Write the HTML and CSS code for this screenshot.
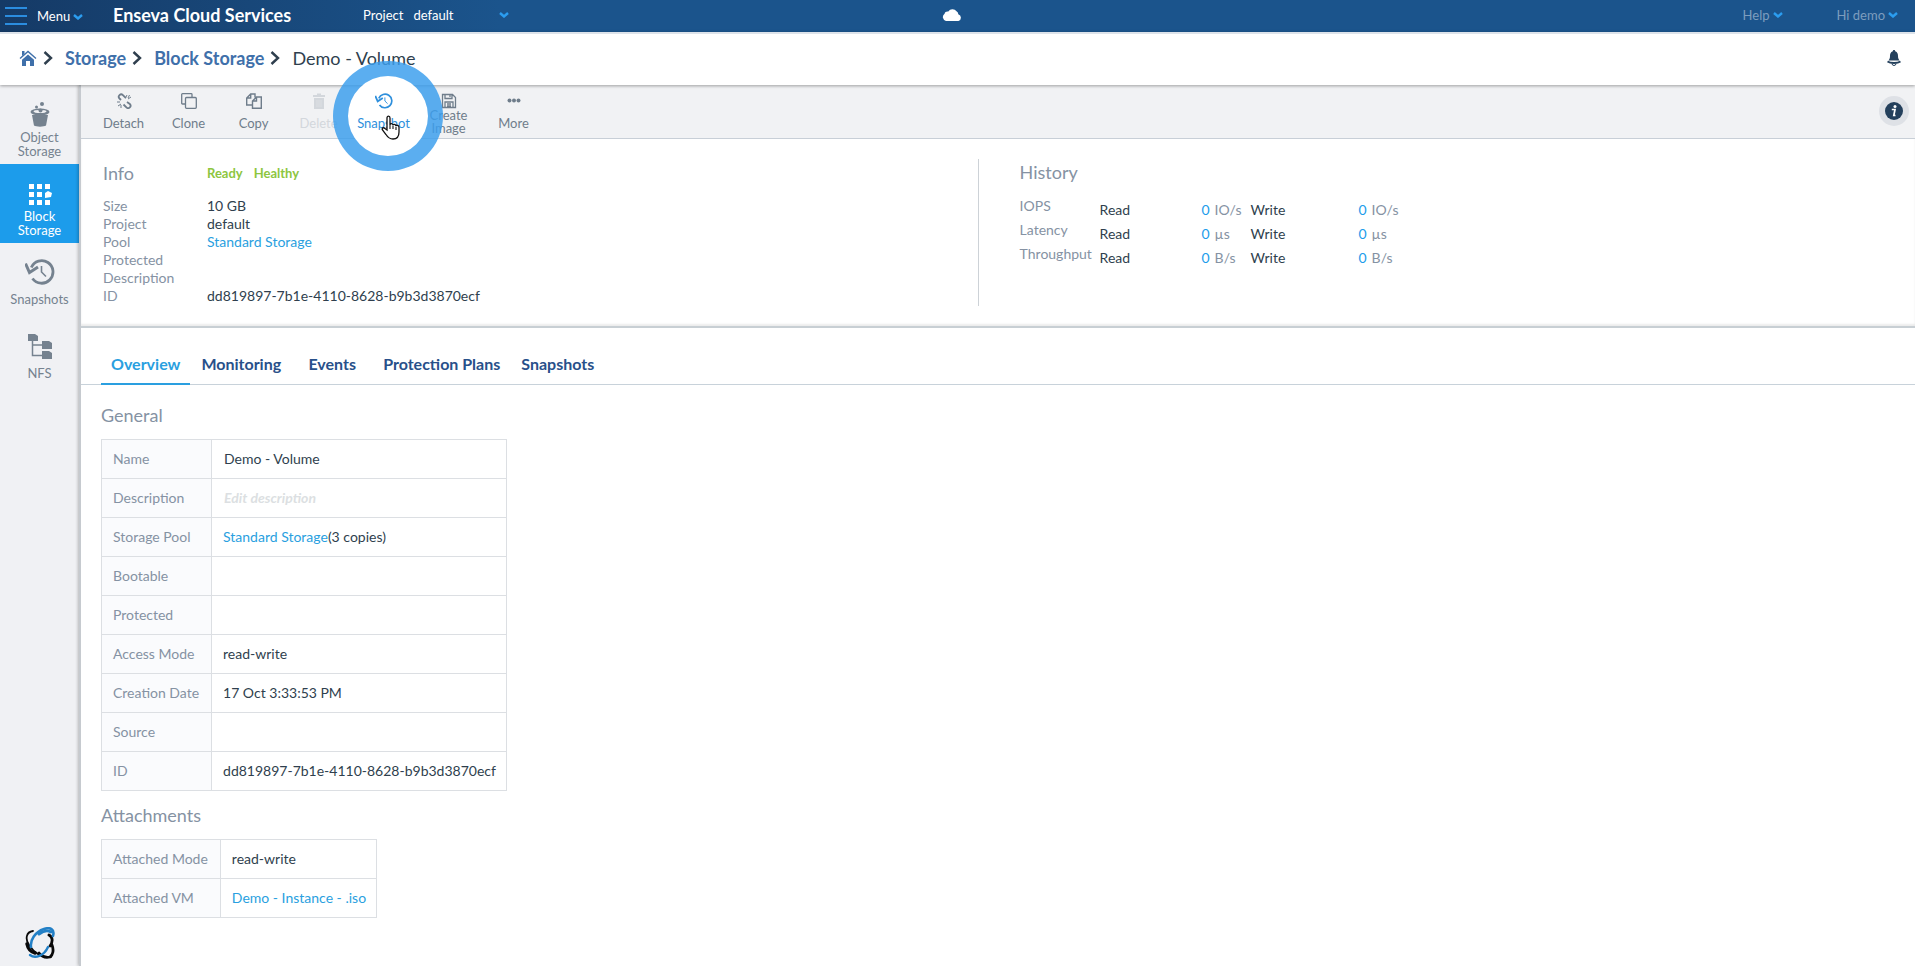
FILE: index.html
```html
<!DOCTYPE html>
<html lang="en">

<head>
    <meta charset="UTF-8" />
    <meta name="viewport" content="width=device-width, initial-scale=1.0" />
    <title>Enseva Cloud Services</title>
    <link rel="stylesheet" href="styles.css">
</head>

<body>
    <!-- shared shapes -->
    <svg class="defs" aria-hidden="true">
        <symbol id="caret" viewBox="0 0 10 6">
            <path d="M1 1l4 3.5L9 1" fill="none" stroke="currentColor" stroke-width="2.4" />
        </symbol>
        <symbol id="chevron" viewBox="0 0 10 14">
            <path d="M1.5 1l6.5 6-6.5 6" fill="none" stroke="currentColor" stroke-width="2.4" />
        </symbol>
        <symbol id="history" viewBox="0 0 30 26">
            <path d="M7.5 19.5a11.3 11.3 0 1 0-1.2-11" fill="none" stroke="currentColor" stroke-width="2.8" />
            <path d="M0.5 4.5l4 9 8.5-5.5" fill="none" stroke="currentColor" stroke-width="3" />
            <path d="M16.5 7v6l4.5 4.5" fill="none" stroke="currentColor" stroke-width="1.6" />
        </symbol>
    </svg>

    <header class="topbar">
        <div class="topbar-left">
            <button class="menu-btn" type="button">
                <svg class="burger" viewBox="0 0 22 18"><path d="M0 1h22M0 9h22M0 17h22" stroke="currentColor" stroke-width="2" /></svg>
                <span>Menu</span>
                <svg class="caret"><use href="#caret" /></svg>
            </button>
            <h1 class="brand">Enseva Cloud Services</h1>
            <div class="project">
                <label for="project">Project</label>
                <select id="project">
                    <option>default</option>
                </select>
                <svg class="caret"><use href="#caret" /></svg>
            </div>
        </div>
        <svg class="cloud" viewBox="0 0 20 12">
            <path d="M4 12a4 4 0 0 1-1.4-7.2C2.8 2.8 5 2 6.3 2.6A5 5 0 0 1 14.5 2.3a3.2 3.2 0 0 1 1.8 3A3.5 3.5 0 0 1 16.5 12z" fill="#fff" />
        </svg>
        <nav class="user-nav">
            <button type="button">Help <svg class="caret"><use href="#caret" /></svg></button>
            <button type="button">Hi demo <svg class="caret"><use href="#caret" /></svg></button>
        </nav>
    </header>

    <div class="crumbs">
        <nav class="trail">
            <a href="#" aria-label="Home">
                <svg class="home" viewBox="0 0 18 16">
                    <path d="M1 8.5L9 1.5l8 7" fill="none" stroke="currentColor" stroke-width="1.4" />
                    <path d="M3 1h2.5v3L3 6z" fill="currentColor" />
                    <path d="M3 9.8l6-5.2 6 5.2V16h-4v-5H7v5H3z" fill="currentColor" />
                </svg>
            </a>
            <svg class="chevron"><use href="#chevron" /></svg>
            <a href="#">Storage</a>
            <svg class="chevron"><use href="#chevron" /></svg>
            <a href="#">Block Storage</a>
            <svg class="chevron"><use href="#chevron" /></svg>
            <span class="current">Demo - Volume</span>
        </nav>
        <button class="bell" type="button" aria-label="Alerts">
            <svg viewBox="0 0 14 16">
                <path d="M7 0c.8 0 1.1.5 1.2 1.2C10.5 2 11 4 11 6c0 2.2.5 3 1.5 4.5h-11C2.5 9 3 8.2 3 6c0-2 .5-4 2.8-4.8C5.9.5 6.2 0 7 0z" fill="currentColor" />
                <path d="M.5 11.5c3 2 10 2 13 0" fill="none" stroke="currentColor" stroke-width="1.8" />
                <path d="M5 13.5a2 2 0 0 0 4 0" fill="none" stroke="currentColor" />
            </svg>
        </button>
    </div>

    <div class="layout">
        <aside class="sidebar">
            <a href="#" class="side-item">
                <svg class="side-icon" viewBox="0 0 28 28">
                    <path d="M6 15h16l-2 10.5c-2 1.5-10 1.5-12 0z" fill="currentColor" />
                    <ellipse cx="14" cy="12" rx="9.5" ry="3.4" fill="currentColor" />
                    <ellipse cx="14" cy="11.5" rx="6.5" ry="1.6" fill="#f0f1f4" />
                    <circle cx="14.5" cy="10.5" r="2" fill="currentColor" />
                    <circle cx="10.5" cy="7" r="1.5" fill="currentColor" />
                    <circle cx="16" cy="4" r="2" fill="currentColor" />
                </svg>
                <span>Object Storage</span>
            </a>
            <a href="#" class="side-item active">
                <svg class="side-icon" viewBox="0 0 28 28">
                    <path d="M3 5h5v5H3zM11 5h5v5h-5zM19 5h5v5h-5zM3 13h5v5H3zM11 13h5v5h-5zM19 14l3-2 4 2-1 4-6 1zM3 21h5v5H3zM11 21h5v5h-5zM19 21h5v5h-5z" fill="currentColor" />
                </svg>
                <span>Block Storage</span>
            </a>
            <a href="#" class="side-item single">
                <svg class="history-icon"><use href="#history" /></svg>
                <span>Snapshots</span>
            </a>
            <a href="#" class="side-item single">
                <svg class="history-icon" viewBox="0 0 30 26">
                    <path d="M3 1h7l3 2v5H3zM17 8h7l3 2v6H17zM17 18h7l3 2v6H17z" fill="currentColor" />
                    <path d="M7.5 8v14.5H17M7.5 12H17" fill="none" stroke="currentColor" stroke-width="1.5" />
                </svg>
                <span>NFS</span>
            </a>
            <svg class="logo" viewBox="0 0 30 32">
                <g fill="none" stroke-linecap="round">
                    <path d="M8 4C1 5 0 12 4 18s11 13 22 12" stroke="#0a0a0a" stroke-width="1.8" />
                    <path d="M2 17c1 5 4 8 8 9" stroke="#0a0a0a" stroke-width="3.4" />
                    <path d="M24 8c4 2 4 7 1 11M27 18c2 5 1 10-2 12-4 1-8 0-11-4" stroke="#0a0a0a" stroke-width="2.8" />
                    <path d="M6 20C5 13 10 5 19 2c6-2 11 0 9 7" stroke="#2380c6" stroke-width="2.6" />
                    <path d="M14 7c4-3 9-4 12-2" stroke="#2380c6" stroke-width="3" />
                    <path d="M5 28c5 4 14 1 18-8" stroke="#2380c6" stroke-width="2.4" />
                </g>
            </svg>
        </aside>

        <main class="main">
            <div class="toolbar">
                <button class="tool" type="button">
                    <svg viewBox="0 0 16 16" fill="none" stroke="currentColor" stroke-width="1.8">
                        <path d="M5 7L3.5 5.5a2.4 2.4 0 0 1 3.4-3.4L10 5.2M11 9l2.8 2a2.4 2.4 0 0 1-3.4 3.4L7.5 11.5" />
                        <path d="M10 4l1-2M12 6l3-2M12 5l1.5-3M1 9h3M2 13l3-2M5 15v-3" stroke-width="1" />
                    </svg>
                    <span>Detach</span>
                </button>
                <button class="tool" type="button">
                    <svg viewBox="0 0 16 16" fill="none" stroke="currentColor" stroke-width="1.3">
                        <path d="M4.5 11h-3a.8.8 0 0 1-.8-.8V1.5a.8.8 0 0 1 .8-.8h8.7a.8.8 0 0 1 .8.8v3" />
                        <rect x="4.5" y="4.5" width="10.8" height="10.8" rx="1" />
                    </svg>
                    <span>Clone</span>
                </button>
                <button class="tool" type="button">
                    <svg viewBox="0 0 16 16" fill="none" stroke="currentColor" stroke-width="1.4">
                        <path d="M6.5 12H.7V5l4-4H9v3.5M4.7 1v4h-4M6.5 15.3V8l4-4h4.8v11.3zM10.5 4v4h-4" />
                    </svg>
                    <span>Copy</span>
                </button>
                <button class="tool" type="button" disabled>
                    <svg viewBox="0 0 16 16" fill="currentColor">
                        <path d="M2 2h4V.5h4V2h4v2H2zM3 5h10v11H3z" />
                        <path d="M6 7v7M8 7v7M10 7v7" stroke="#dcdfe3" />
                    </svg>
                    <span>Delete</span>
                </button>
                <button class="tool hot" type="button">
                    <i class="ring"></i>
                    <svg class="hot-icon"><use href="#history" /></svg>
                    <span>Snapshot</span>
                    <svg class="pointer" viewBox="0 0 19 25">
                        <path d="M6 15V3c0-2.5 3-2.5 3 0v7c0-2 3-2 3 .5 0-1.8 3-1.6 3 .7 0-1.5 3-1.3 3 1V17c0 4-1.5 7-6 7-4 0-5.500-2-7-4.500L1.500 15c-1-2 1-3 2.500-1.500z" fill="#fff" stroke="#111" stroke-width="1.3" />
                        <path d="M9 10v4M12 11v3M15 12v3" stroke="#111" stroke-width="1.1" />
                    </svg>
                </button>
                <button class="tool wrap" type="button">
                    <svg viewBox="0 0 16 16" fill="none" stroke="currentColor" stroke-width="1.3">
                        <path d="M1.5 1.5h10l3 3v10h-13zM4 14.5V9h8v5.5M4 1.5v4h7v-4M6 11h4M6 13h4M9 2v2" />
                    </svg>
                    <span>Create Image</span>
                </button>
                <button class="tool" type="button">
                    <svg viewBox="0 0 16 16" fill="currentColor">
                        <circle cx="3.5" cy="7.5" r="2" />
                        <circle cx="8" cy="7.5" r="2" />
                        <circle cx="12.5" cy="7.5" r="2" />
                    </svg>
                    <span>More</span>
                </button>
                <button class="info-btn" type="button" aria-label="Information">
                    <svg viewBox="0 0 18 18">
                        <circle cx="9" cy="9" r="9" fill="currentColor" />
                        <circle cx="10" cy="4.5" r="1.5" fill="#fff" />
                        <path d="M6.8 7.5H10l-1.2 6h1.7" fill="none" stroke="#fff" stroke-width="1.7" />
                    </svg>
                </button>
            </div>

            <section class="summary">
                <div class="info">
                    <h2>Info</h2>
                    <p class="status"><span>Ready</span><span>Healthy</span></p>
                    <dl>
                        <dt>Size</dt>
                        <dd>10 GB</dd>
                        <dt>Project</dt>
                        <dd>default</dd>
                        <dt>Pool</dt>
                        <dd><a href="#">Standard Storage</a></dd>
                        <dt>Protected</dt>
                        <dd></dd>
                        <dt>Description</dt>
                        <dd></dd>
                        <dt>ID</dt>
                        <dd>dd819897-7b1e-4110-8628-b9b3d3870ecf</dd>
                    </dl>
                </div>
                <div class="history">
                    <h2>History</h2>
                    <table>
                        <tr>
                            <th scope="row">IOPS</th>
                            <td class="op">Read</td>
                            <td class="num">0</td>
                            <td class="unit">IO/s</td>
                            <td class="op">Write</td>
                            <td class="num">0</td>
                            <td class="unit">IO/s</td>
                        </tr>
                        <tr>
                            <th scope="row">Latency</th>
                            <td class="op">Read</td>
                            <td class="num">0</td>
                            <td class="unit">µs</td>
                            <td class="op">Write</td>
                            <td class="num">0</td>
                            <td class="unit">µs</td>
                        </tr>
                        <tr>
                            <th scope="row">Throughput</th>
                            <td class="op">Read</td>
                            <td class="num">0</td>
                            <td class="unit">B/s</td>
                            <td class="op">Write</td>
                            <td class="num">0</td>
                            <td class="unit">B/s</td>
                        </tr>
                    </table>
                </div>
            </section>

            <nav class="tabs">
                <a href="#" class="active">Overview</a>
                <a href="#">Monitoring</a>
                <a href="#">Events</a>
                <a href="#">Protection Plans</a>
                <a href="#">Snapshots</a>
            </nav>

            <section class="details">
                <h2>General</h2>
                <table class="props">
                    <tr>
                        <th scope="row"><label for="volName">Name</label></th>
                        <td><input type="text" id="volName" value="Demo - Volume" /></td>
                    </tr>
                    <tr>
                        <th scope="row"><label for="volDesc">Description</label></th>
                        <td><input type="text" id="volDesc" placeholder="Edit description" /></td>
                    </tr>
                    <tr>
                        <th scope="row">Storage Pool</th>
                        <td><a href="#">Standard Storage</a>(3 copies)</td>
                    </tr>
                    <tr>
                        <th scope="row">Bootable</th>
                        <td></td>
                    </tr>
                    <tr>
                        <th scope="row">Protected</th>
                        <td></td>
                    </tr>
                    <tr>
                        <th scope="row">Access Mode</th>
                        <td>read-write</td>
                    </tr>
                    <tr>
                        <th scope="row">Creation Date</th>
                        <td>17 Oct 3:33:53 PM</td>
                    </tr>
                    <tr>
                        <th scope="row">Source</th>
                        <td></td>
                    </tr>
                    <tr>
                        <th scope="row">ID</th>
                        <td>dd819897-7b1e-4110-8628-b9b3d3870ecf</td>
                    </tr>
                </table>

                <h2>Attachments</h2>
                <table class="props">
                    <tr>
                        <th scope="row">Attached Mode</th>
                        <td>read-write</td>
                    </tr>
                    <tr>
                        <th scope="row">Attached VM</th>
                        <td><a href="#">Demo - Instance - .iso</a></td>
                    </tr>
                </table>
            </section>
        </main>
    </div>
</body>

</html>
```
FILE: styles.css
```css
:root {
    --accent: #2a9fe0;
    --active: #1c9ceb;
    --navy: #28508a;
    --text: #2f3f4e;
    --muted: #8592a3;
    --line: #dcdfe3;
    --panel: #f0f1f4;
}

* {
    box-sizing: border-box;
}

body {
    margin: 0;
    min-height: 100vh;
    display: flex;
    flex-direction: column;
    font-family: Lato, sans-serif;
    font-size: 14px;
    line-height: 18px;
    color: var(--text);
    background: #fff;
}

a {
    color: var(--accent);
    text-decoration: none;
}

button,
select,
input {
    font: inherit;
    color: inherit;
    background: none;
    border: none;
    padding: 0;
    margin: 0;
}

button {
    cursor: pointer;
}

h1,
h2,
p,
dl,
dd {
    margin: 0;
}

h2 {
    font-size: 18px;
    line-height: 24px;
    font-weight: 400;
    color: var(--muted);
}

svg {
    display: block;
    flex: none;
}

.defs {
    position: absolute;
    width: 0;
    height: 0;
}

/* Top bar */
.topbar {
    display: flex;
    align-items: center;
    height: 32px;
    padding: 0 5px 2px;
    font-size: 13px;
    color: #fff;
    background: linear-gradient(90deg, #153a66 0, #1b548c 500px);
}

.topbar-left {
    flex: 1;
    display: flex;
    align-items: center;
}

.caret {
    width: 10px;
    height: 6px;
    color: #2b9df0;
}

.menu-btn {
    display: flex;
    align-items: center;
    width: 108px;
    padding-top: 2px;
}

.burger {
    width: 22px;
    height: 18px;
    margin-right: 10px;
    color: #2b8de0;
}

.menu-btn .caret {
    margin: 2px 0 0 3px;
}

.brand {
    width: 250px;
    font-size: 18px;
    font-weight: 700;
    white-space: nowrap;
}

.project {
    display: flex;
    align-items: center;
    gap: 10px;
}

.project select {
    appearance: none;
    width: 76px;
}

.cloud {
    width: 20px;
    height: 12px;
}

.user-nav {
    flex: 1;
    display: flex;
    justify-content: flex-end;
    gap: 54px;
    padding-right: 12px;
    color: #7d9dbe;
}

.user-nav button {
    display: flex;
    align-items: center;
    gap: 3px;
}

/* Breadcrumbs */
.crumbs {
    display: flex;
    align-items: center;
    justify-content: space-between;
    height: 53px;
    padding: 0 14px 4px 19px;
    border-top: 2px solid #dde3ea;
    position: relative;
    z-index: 1;
    box-shadow: 0 1px 3px rgba(0, 0, 0, 0.35);
    background: #fff;
}

.trail {
    display: flex;
    align-items: center;
    font-size: 18px;
}

.trail a {
    font-weight: 700;
    color: #3f70aa;
}

.chevron {
    width: 10px;
    height: 14px;
    margin: 0 12px 0 6px;
}

.home {
    width: 18px;
    height: 16px;
}

.bell svg {
    width: 14px;
    height: 16px;
    color: #24405c;
}

/* Layout */
.layout {
    flex: 1;
    display: flex;
}

.sidebar {
    flex: 0 0 79px;
    display: flex;
    flex-direction: column;
    font-size: 13px;
    background: var(--panel);
}

.side-item {
    display: flex;
    flex-direction: column;
    align-items: center;
    height: 79px;
    padding: 15px 10px 0;
    line-height: 14px;
    text-align: center;
    color: #75828f;
}

.side-item.active {
    color: #fff;
    background: var(--active);
}

.side-item.single {
    height: 74px;
    padding: 16px 0 0;
}

.side-icon {
    width: 28px;
    height: 28px;
    margin-bottom: 2px;
}

.history-icon {
    width: 30px;
    height: 26px;
    margin-bottom: 7px;
}

.logo {
    width: 30px;
    height: 32px;
    margin: auto auto 7px 25px;
}

.main {
    flex: 1;
    min-width: 0;
    border-left: 2px solid #c6cacf;
    box-shadow: -1px 0 3px rgba(0, 0, 0, 0.25);
}

/* Toolbar */
.toolbar {
    display: flex;
    align-items: flex-start;
    height: 54px;
    padding: 8px 6px 0 10px;
    color: #6f7d8b;
    background: #f1f2f4;
    border-bottom: 1px solid #c8cfd7;
}

.tool {
    position: relative;
    display: flex;
    flex-direction: column;
    align-items: center;
    gap: 6px;
    width: 65px;
    font-size: 13px;
    line-height: 16px;
}

.tool svg {
    width: 16px;
    height: 16px;
}

.tool .hot-icon {
    width: 18px;
}

.tool:disabled {
    color: #d3d7dc;
}

.tool.wrap {
    gap: 0;
    padding: 0 10px;
    line-height: 13px;
}

.tool.hot {
    z-index: 2;
    color: #2e8fdc;
}

/* click highlight round the pressed tool */
.ring {
    position: absolute;
    z-index: -1;
    left: -18px;
    top: -32px;
    width: 110px;
    height: 110px;
    border: 15px solid rgba(58, 157, 237, 0.83);
    border-radius: 50%;
    background: #fff padding-box;
}

.tool .pointer {
    position: absolute;
    left: 30px;
    top: 22px;
    width: 19px;
    height: 25px;
}

.info-btn {
    display: flex;
    align-items: center;
    justify-content: center;
    width: 30px;
    height: 30px;
    margin: 3px 0 0 auto;
    border-radius: 50%;
    color: #24405c;
    background: #dee1e6;
}

.info-btn svg {
    width: 18px;
    height: 18px;
}

/* Summary */
.summary {
    display: grid;
    grid-template-columns: 22fr 23fr;
    padding: 20px 0;
    border-bottom: 2px solid #c8cfd4;
    box-shadow: inset 0 -2px 2px rgba(0, 0, 0, 0.08);
}

.info {
    display: grid;
    grid-template-columns: 104px 1fr;
    align-content: start;
    align-items: center;
    row-gap: 12px;
    min-height: 147px;
    padding: 2px 0 0 22px;
}

.status {
    display: flex;
    gap: 11px;
    font-size: 13px;
    font-weight: 700;
    color: #8dc63f;
}

.info dl {
    grid-column: 1 / -1;
    display: grid;
    grid-template-columns: 104px 1fr;
    grid-auto-rows: 18px;
}

.info dt {
    color: var(--muted);
}

.history {
    padding: 1px 0 0 41px;
    border-left: 1px solid #cdd2d7;
}

.history table {
    margin-top: 13px;
    border-spacing: 0;
}

.history th,
.history td {
    height: 24px;
    padding: 0;
    vertical-align: top;
    text-align: left;
    font-weight: 400;
}

.history th {
    width: 80px;
    color: var(--muted);
}

.history td {
    padding-top: 4px;
}

.history .op {
    width: 98px;
}

.history .unit + .op {
    width: 104px;
}

.history .num {
    width: 12px;
    text-align: right;
    color: var(--active);
}

.history .unit {
    width: 41px;
    padding-left: 5px;
    color: var(--muted);
}

/* Tabs */
.tabs {
    display: flex;
    gap: 1px;
    padding: 19px 20px 0;
    border-bottom: 1px solid #c8d2da;
}

.tabs a {
    min-width: 80px;
    height: 38px;
    margin-bottom: -1px;
    padding: 8px 10px 0;
    font-size: 16px;
    font-weight: 700;
    text-align: center;
    color: var(--navy);
}

.tabs .active {
    color: var(--accent);
    border-bottom: 2px solid var(--accent);
}

/* Details */
.details {
    padding: 18px 20px;
}

.props {
    margin: 12px 0;
    border-collapse: collapse;
}

.props th,
.props td {
    height: 39px;
    padding: 0 10px 0 11px;
    text-align: left;
    font-weight: 400;
    border: 1px solid var(--line);
}

.props th {
    padding-right: 12px;
    color: var(--muted);
    background: #fafbfd;
}

.props input {
    width: 100%;
    padding: 0 1px;
}

.props input::placeholder {
    font-style: italic;
    font-weight: 700;
    color: #dcdfe2;
}
```
